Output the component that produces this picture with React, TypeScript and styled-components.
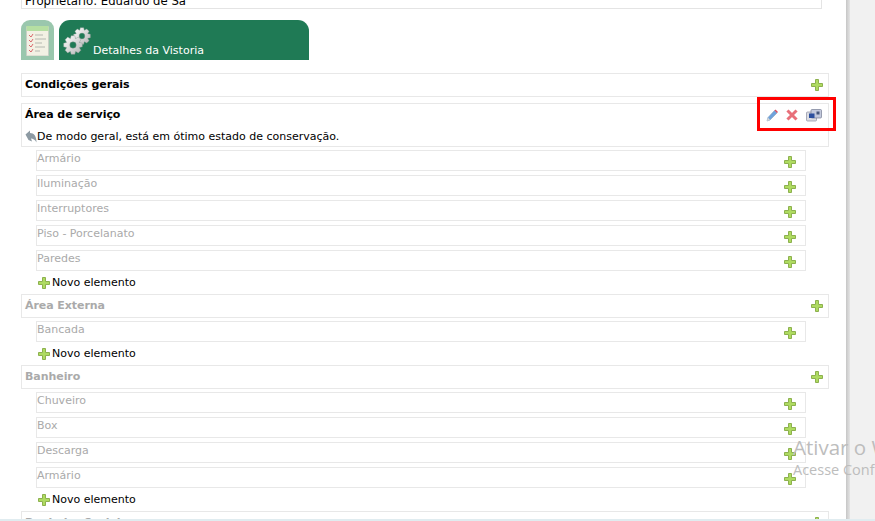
import React from "react";
import styled, { createGlobalStyle } from "styled-components";

const Global = createGlobalStyle`
  html, body { margin: 0; padding: 0; background: #fff; overflow: hidden; }
  body { font-family: "DejaVu Sans", Verdana, sans-serif; font-size: 11px; color: #000; }
`;
const Page = styled.div`
  position: relative; width: 875px; height: 521px; overflow: hidden; display: flex; background: #f1f1f1;
`;
const Content = styled.main`
  width: 846px; height: 521px; flex: none; box-sizing: border-box; padding-left: 21px; background: #fff; overflow: hidden;
`;
const Side = styled.div`
  width: 4px; flex: none; background: linear-gradient(to right, #c6c6c6, #e4e4e4);
`;
const OwnerBox = styled.div`
  width: 801px; height: 9px; box-sizing: border-box; border: 1px solid #e4e4e4; border-top: 0; padding-left: 3px;
  display: flex; align-items: flex-end; overflow: hidden;
`;
const OwnerText = styled.span`
  flex: none; line-height: 14px; font-size: 11.700px;
`;
const Tabs = styled.div`
  display: flex; gap: 5px; margin-top: 11px; height: 40px;
`;
const NoteTab = styled.div`
  width: 33px; height: 40px; background: #9ac7ad; border-radius: 9px 9px 0 0; display: flex; justify-content: center; align-items: flex-end;
`;
const DetailTab = styled.div`
  width: 250px; height: 40px; background: #1f7a55; border-radius: 11px 11px 0 0; display: flex; align-items: flex-end; padding-left: 4px; box-sizing: border-box;
`;
const TabLabel = styled.span`
  color: #fff; font-size: 11px; line-height: 14px; margin-left: 2px; margin-bottom: 2px;
`;
const List = styled.div`
  margin-top: 13px; display: flex; flex-direction: column;
`;
const Row = styled.div<{ $muted?: boolean }>`
  width: 808px; height: 24px; flex: none; box-sizing: border-box; border: 1px solid #e8e8e8;
  padding: 4px 4px 0 3px; display: flex; justify-content: space-between; align-items: flex-start; line-height: 14px;
  font-weight: 700; letter-spacing: -0.06px; color: ${(p) => (p.$muted ? "#aaaaaa" : "#000")};
`;
const OpenRow = styled.div`
  position: relative; width: 808px; height: 44px; margin-top: 6px; box-sizing: border-box; border: 1px solid #e8e8e8; padding: 3px 3px 0;
`;
const OpenTitle = styled.div`
  font-weight: 700; letter-spacing: -0.06px; line-height: 14px; margin-top: 1px;
`;
const Note = styled.div`
  display: flex; align-items: center; height: 14px; margin-top: 7px;
  svg { flex: none; }
`;
const ActionIcons = styled.div`
  position: absolute; right: 6px; top: 3px; display: flex; gap: 8px; align-items: center; height: 16px;
`;
const Highlight = styled.div`
  position: absolute; left: 757px; top: 97px; width: 79px; height: 34px; box-sizing: border-box; border: 3px solid #f00; pointer-events: none;
`;
const SubList = styled.div`
  margin-left: 15px; margin-top: 3px; display: flex; flex-direction: column; gap: 4px;
`;
const SubRow = styled.div`
  width: 770px; height: 21px; box-sizing: border-box; border: 1px solid #e8e8e8;
  padding-top: 1px; display: flex; justify-content: space-between; align-items: flex-start; color: #aaaaaa; line-height: 14px;
  svg { margin-right: 8px; margin-top: 3px; }
`;
const NewItem = styled.div`
  margin-left: 16px; height: 23px; display: flex; align-items: center;
  svg { margin-right: 1px; }
`;
const Watermark = styled.div`
  position: absolute; left: 793px; top: 434px; white-space: nowrap; color: #bdbdbd; font-family: "Open Sans", sans-serif; pointer-events: none;
`;
const WmTitle = styled.div`
  font-size: 20.500px; line-height: 26px;
`;
const WmSub = styled.div`
  font-size: 14.500px; line-height: 18px; margin-top: 1px;
`;
const BottomStrip = styled.div`
  position: absolute; left: 0; right: 0; bottom: 0; height: 2px; background: #e0ecf0;
`;

const Plus = () => (
  <svg width="14" height="14" viewBox="0 0 14 14">
    <path d="M5.500 1.500h3v4h4v3h-4v4h-3v-4h-4v-3h4z" fill="#aedb60" stroke="#8db04e" strokeWidth="1" strokeLinejoin="round" />
  </svg>
);
const Reply = () => (
  <svg width="12" height="13" viewBox="0 0 12 13">
    <path d="M0.500 4.500 5 0.500V3C9 3 11.500 6 11.500 12.500 10 9.500 8 8.500 6 8.500L7 11.500 3.500 10z" fill="#8d9aa3" />
  </svg>
);
const Pencil = () => (
  <svg width="12" height="13" viewBox="0 0 12 13">
    <path d="M1 12 2 8.500 8.500 1.500 11 4 4 11z" fill="#6fa3dc" stroke="#86a0bc" strokeWidth=".6" />
    <path d="M8.500 1.500 9.500.5 12 3 11 4z" fill="#dc4a5e" />
    <path d="M1 12 2 8.500 4 11z" fill="#d8d8d8" />
  </svg>
);
const Cross = () => (
  <svg width="12" height="12" viewBox="0 0 12 12">
    <path d="M2.500 2.500 9.500 9.500M9.500 2.500 2.500 9.500" stroke="#e8707a" strokeWidth="3" strokeLinecap="square" />
  </svg>
);
const Camera = () => (
  <svg width="16" height="14" viewBox="0 0 16 14">
    <rect x="0.500" y="4" width="10" height="9" rx="1" fill="#dcdde3" stroke="#8a8ea0" strokeWidth=".7" />
    <rect x="5" y="1.500" width="10.500" height="8.500" rx="1" fill="#c3c9dc" stroke="#767c94" strokeWidth=".7" />
    <rect x="3" y="5.500" width="5.500" height="4.500" fill="#2c4f9e" />
    <rect x="10.500" y="3.500" width="3" height="3" fill="#46567a" />
  </svg>
);
const Notepad = () => (
  <svg width="23" height="30" viewBox="0 0 23 30" style={{ marginBottom: 4 }}>
    <rect x="0.500" y="1" width="22" height="29" fill="#f3f1e4" stroke="#c9cfc5" />
    <rect x="0.500" y="0" width="22" height="5" fill="#b5dfa2" />
    <path d="M3 9l2 2 2-3M3 14l2 2 2-3M3 19l2 2 2-3M3 24l2 2 2-3" fill="none" stroke="#d9696e" strokeWidth="1" />
    <path d="M9 9h8M9 13h11M9 17h7M9 21h10M9 25h5" stroke="#b5b8b0" strokeWidth="1" />
  </svg>
);
const gearPath = (cx: number, cy: number, r: number) => {
  const teeth = 8;
  const pts: string[] = [];
  for (let i = 0; i < teeth; i++) {
    const a = (i * 2 * Math.PI) / teeth;
    const w = Math.PI / teeth;
    [[r * 0.74, -w * 0.95], [r, -w * 0.5], [r, w * 0.5], [r * 0.74, w * 0.95]].forEach(([rad, off]) => {
      pts.push(`${(cx + rad * Math.cos(a + off)).toFixed(2)} ${(cy + rad * Math.sin(a + off)).toFixed(2)}`);
    });
  }
  const h = r * 0.34;
  return `M${pts.join("L")}Z M${cx - h} ${cy}a${h} ${h} 0 1 0 ${2 * h} 0a${h} ${h} 0 1 0 ${-2 * h} 0Z`;
};
const Gears = () => (
  <svg width="28" height="28" viewBox="0 0 28 28" style={{ marginBottom: 5, flex: "none" }}>
    <defs>
      <linearGradient id="gearFill" x1="0" y1="0" x2="1" y2="1">
        <stop offset="0" stopColor="#ffffff" />
        <stop offset="1" stopColor="#b4b4b4" />
      </linearGradient>
    </defs>
    <path d={gearPath(19, 9, 8.5)} fill="url(#gearFill)" fillRule="evenodd" stroke="#8c9a92" strokeWidth=".4" />
    <path d={gearPath(10, 18, 9.5)} fill="url(#gearFill)" fillRule="evenodd" stroke="#8c9a92" strokeWidth=".4" />
  </svg>
);

const App = () => (
  <Page>
    <Global />
    <Content>
      <OwnerBox><OwnerText>Proprietário: Eduardo de Sá</OwnerText></OwnerBox>
      <Tabs>
        <NoteTab><Notepad /></NoteTab>
        <DetailTab><Gears /><TabLabel>Detalhes da Vistoria</TabLabel></DetailTab>
      </Tabs>
      <List>
        <Row>Condições gerais<Plus /></Row>
        <OpenRow>
          <OpenTitle>Área de serviço</OpenTitle>
          <ActionIcons><Pencil /><Cross /><Camera /></ActionIcons>
          <Note><Reply />De modo geral, está em ótimo estado de conservação.</Note>
        </OpenRow>
        <SubList>
          {["Armário", "Iluminação", "Interruptores", "Piso - Porcelanato", "Paredes"].map((t) => (
            <SubRow key={t}>{t}<Plus /></SubRow>
          ))}
        </SubList>
        <NewItem><Plus />Novo elemento</NewItem>
        <Row $muted>Área Externa<Plus /></Row>
        <SubList>
          <SubRow>Bancada<Plus /></SubRow>
        </SubList>
        <NewItem><Plus />Novo elemento</NewItem>
        <Row $muted>Banheiro<Plus /></Row>
        <SubList>
          {["Chuveiro", "Box", "Descarga", "Armário"].map((t) => (
            <SubRow key={t}>{t}<Plus /></SubRow>
          ))}
        </SubList>
        <NewItem><Plus />Novo elemento</NewItem>
        <Row $muted>Banheiro Social<Plus /></Row>
      </List>
    </Content>
    <Side />
    <Highlight />
    <Watermark>
      <WmTitle>Ativar o Windows</WmTitle>
      <WmSub>Acesse Configurações</WmSub>
    </Watermark>
    <BottomStrip />
  </Page>
);
export default App;
